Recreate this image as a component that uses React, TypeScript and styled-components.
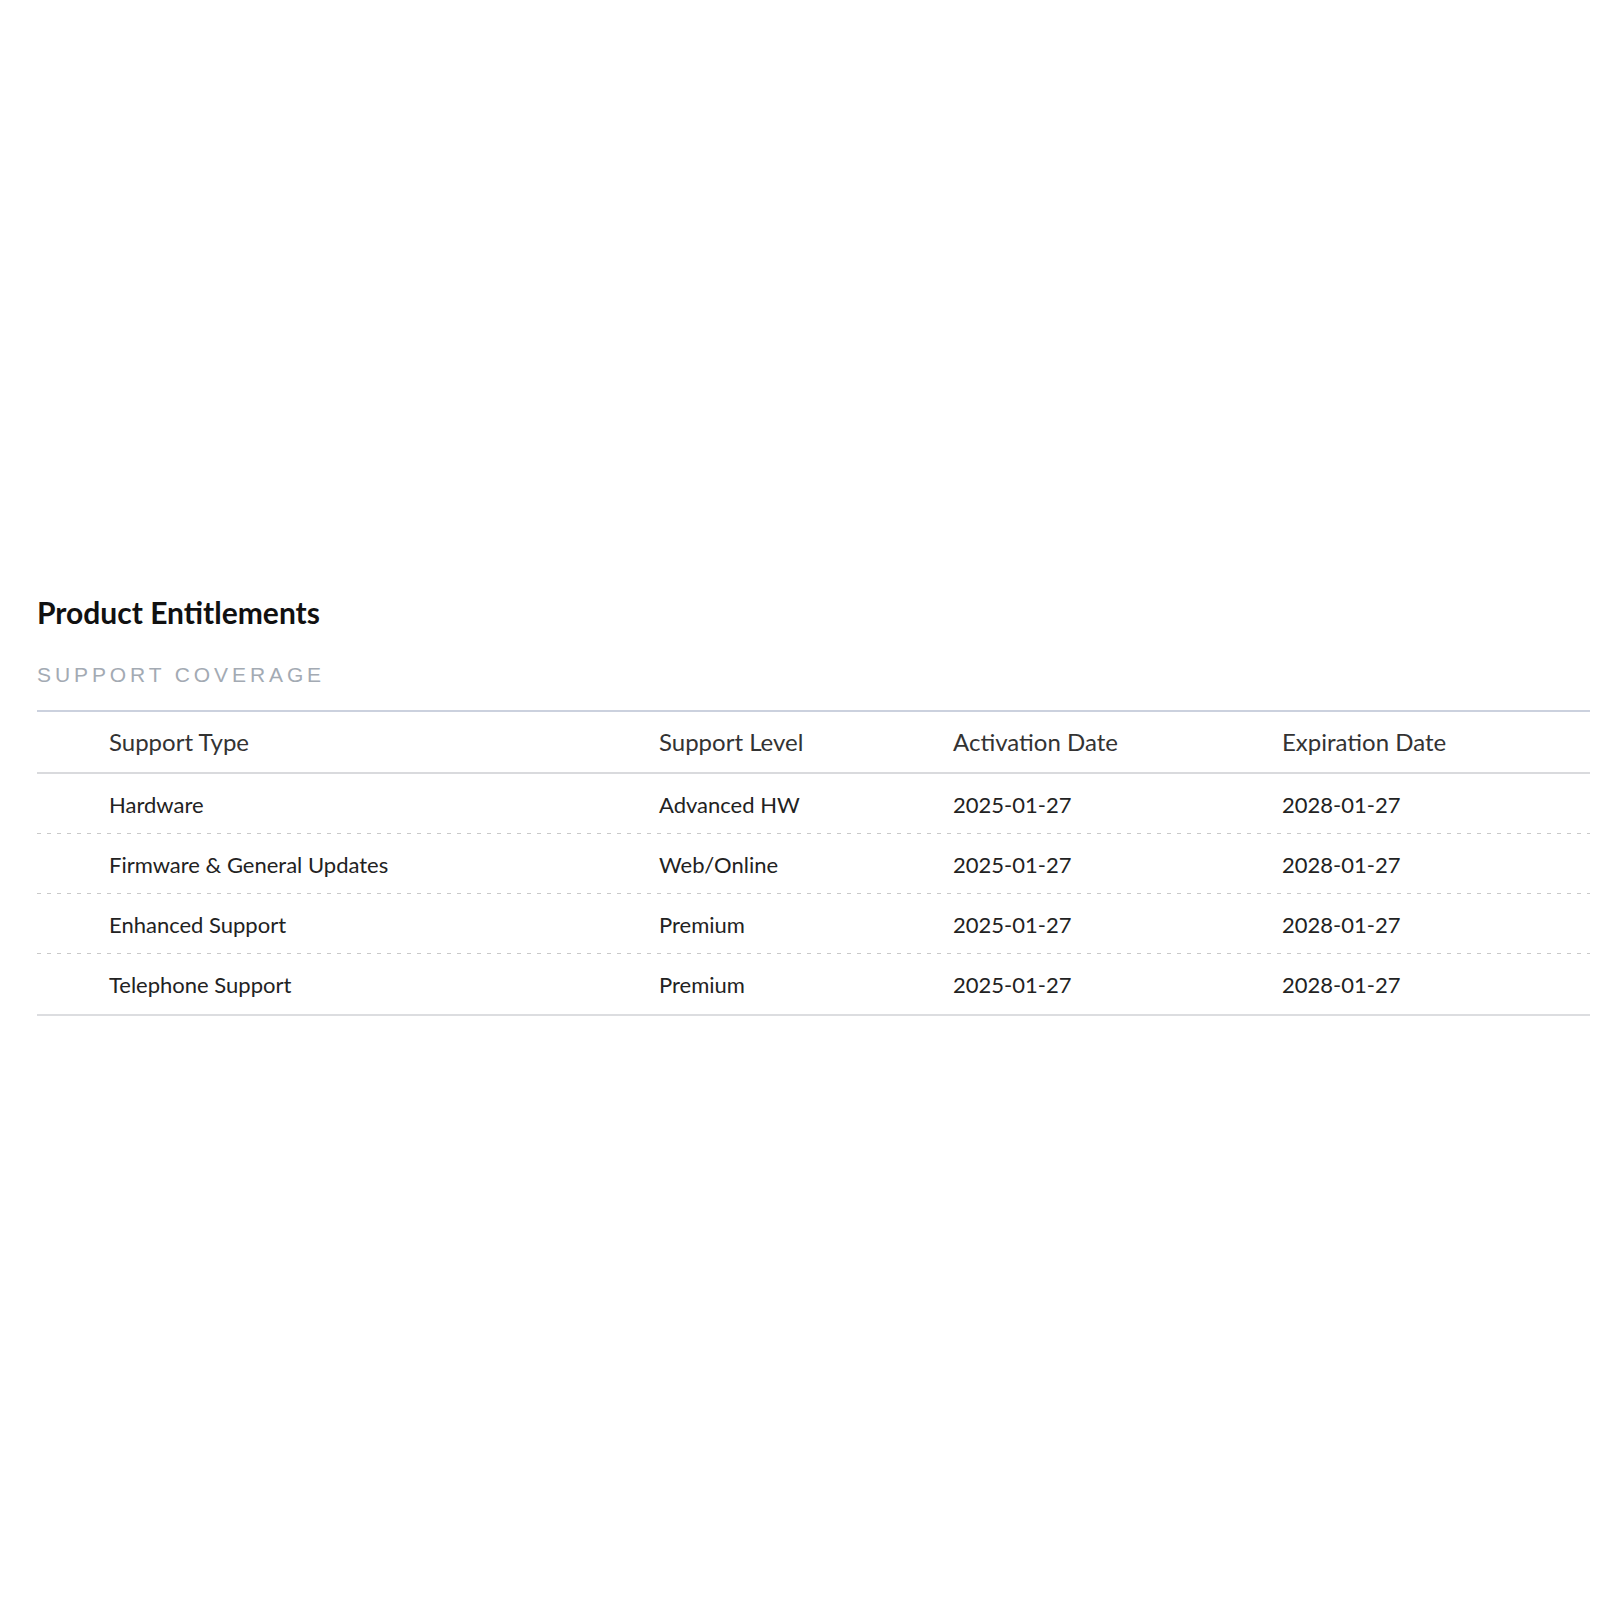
import React from "react";
import styled, { createGlobalStyle } from "styled-components";

const GlobalStyle = createGlobalStyle`
  html, body {
    margin: 0;
    padding: 0;
    background: #ffffff;
  }
  body {
    font-family: Lato, "Noto Sans", sans-serif;
    color: #222;
  }
`;

const Page = styled.div`
  width: 1600px;
  height: 1600px;
  box-sizing: border-box;
  padding: 595px 10px 0 37px;
`;

const Title = styled.h2`
  margin: 0;
  font-family: Lato, sans-serif;
  font-weight: 700;
  font-size: 30px;
  line-height: 34px;
  color: #111;
`;

const Subtitle = styled.div`
  margin-top: 34px;
  font-family: "Liberation Sans", Arial, sans-serif;
  font-size: 21px;
  line-height: 24px;
  letter-spacing: 3.9px;
  text-transform: uppercase;
  color: #a3aab3;
`;

const Table = styled.div`
  margin-top: 23px;
  border-top: 2px solid #cbd1de;
  border-bottom: 2px solid #dcdde0;
`;

const columns = "550px 294px 329px 1fr";

const HeaderRow = styled.div`
  display: grid;
  grid-template-columns: ${columns};
  align-items: center;
  height: 60px;
  padding-left: 72px;
  border-bottom: 2px solid #d9dadd;
`;

const HeaderCell = styled.div`
  font-size: 24px;
  color: #333;
  line-height: 1;
`;

const Row = styled.div<{ $last?: boolean }>`
  display: grid;
  grid-template-columns: ${columns};
  align-items: center;
  height: 60px;
  box-sizing: border-box;
  padding-left: 72px;
  padding-top: 2px;
  background-image: ${(p) =>
    p.$last ? "none" : "linear-gradient(to right, #c9c9c9 0 4px, transparent 4px 10px)"};
  background-size: 10px 1px;
  background-repeat: repeat-x;
  background-position: left bottom;
`;

const Cell = styled.div`
  font-size: 22px;
  color: #222;
  line-height: 1;
`;

const rows = [
  ["Hardware", "Advanced HW", "2025-01-27", "2028-01-27"],
  ["Firmware & General Updates", "Web/Online", "2025-01-27", "2028-01-27"],
  ["Enhanced Support", "Premium", "2025-01-27", "2028-01-27"],
  ["Telephone Support", "Premium", "2025-01-27", "2028-01-27"],
];

export default function App() {
  return (
    <>
      <GlobalStyle />
      <Page>
        <Title>Product Entitlements</Title>
        <Subtitle>Support Coverage</Subtitle>
        <Table>
          <HeaderRow>
            <HeaderCell>Support Type</HeaderCell>
            <HeaderCell>Support Level</HeaderCell>
            <HeaderCell>Activation Date</HeaderCell>
            <HeaderCell>Expiration Date</HeaderCell>
          </HeaderRow>
          {rows.map((r, i) => (
            <Row key={i} $last={i === rows.length - 1}>
              {r.map((c, j) => (
                <Cell key={j}>{c}</Cell>
              ))}
            </Row>
          ))}
        </Table>
      </Page>
    </>
  );
}
